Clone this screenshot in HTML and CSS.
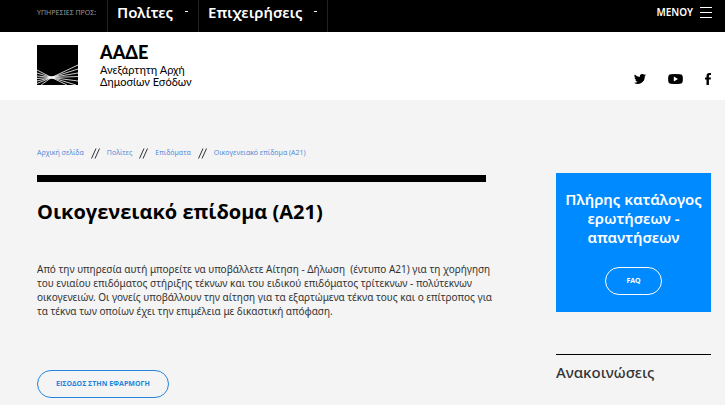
FILE: index.html
```html
<!DOCTYPE html>
<html lang="el">
<head>
<meta charset="utf-8">
<meta name="viewport" content="width=device-width, initial-scale=1">
<title>Οικογενειακό επίδομα (Α21) | ΑΑΔΕ</title>
<link rel="stylesheet" href="styles.css">
</head>
<body>
<nav class="topbar">
  <span class="topbar-label">ΥΠΗΡΕΣΙΕΣ ΠΡΟΣ:</span>
  <a class="topbar-item" href="#">Πολίτες<span class="dash"></span></a>
  <a class="topbar-item" href="#">Επιχειρήσεις<span class="dash"></span></a>
  <button class="menu-button" type="button">ΜΕΝΟΥ
    <svg width="12" height="12" viewBox="0 0 12 12" aria-hidden="true"><path d="M0 1.500h12M0 6.500h12M0 11.500h12" stroke="#fff"/></svg>
  </button>
</nav>
<header class="masthead">
  <a class="brand" href="#">
    <svg class="brand-mark" width="41" height="40" viewBox="0 0 41 40" aria-hidden="true">
      <rect width="41" height="40" fill="#000"/>
      <g stroke="#fff" stroke-width="0.8">
        <path d="M0 25L14.500 32.500L41 20M0 28L14.500 32.500L41 24M0 31L14.500 32.500L41 28M0 33.500L14.500 32.500L41 31.500M0 36L14.500 32.500L41 36M0 38.500L14.500 32.500L39 40M4 40L14.500 32.500L30 40" fill="none"/>
      </g>
      <ellipse cx="14.500" cy="32.500" rx="3" ry="1.200" fill="#fff"/>
    </svg>
    <span class="brand-text">
      <span class="brand-name">ΑΑΔΕ</span>
      <span class="brand-line">Ανεξάρτητη Αρχή</span>
      <span class="brand-line">Δημοσίων Εσόδων</span>
    </span>
  </a>
  <div class="social">
    <a href="#" aria-label="Twitter"><svg width="12" height="10" viewBox="0 0 24 20"><path d="M24 2.400a9.800 9.800 0 0 1-2.800.8A5 5 0 0 0 23.300.5a9.900 9.900 0 0 1-3.100 1.200 4.900 4.900 0 0 0-8.400 4.500A14 14 0 0 1 1.700 1a4.900 4.900 0 0 0 1.500 6.600 4.900 4.900 0 0 1-2.200-.6 4.900 4.900 0 0 0 3.900 4.900 5 5 0 0 1-2.200.1 4.900 4.900 0 0 0 4.600 3.400A9.900 9.900 0 0 1 0 17.500 14 14 0 0 0 21.500 5 10 10 0 0 0 24 2.400z"/></svg></a>
    <a href="#" aria-label="YouTube"><svg width="15" height="10" viewBox="0 0 15 10"><path fill-rule="evenodd" d="M3 .2Q7.500-.2 12 .2Q14.500.3 14.700 2.500Q15 5 14.700 7.500Q14.500 9.700 12 9.800Q7.500 10.200 3 9.800Q.5 9.700.3 7.500Q0 5 .3 2.500Q.5.300 3 .2zM5.800 2.500v5L10 5z"/></svg></a>
    <a href="#" aria-label="Facebook"><svg width="6" height="12" viewBox="0 0 6 12"><path d="M1.500 12V6.600H0V4.500h1.500V3Q1.500.1 4.200.1H6v2H4.900Q3.900 2.100 3.900 3v1.500H6l-.3 2.100H3.900V12z"/></svg></a>
  </div>
</header>
<div class="page">
  <main>
    <nav class="breadcrumb">
      <a href="#">Αρχική σελίδα</a>
      <svg class="slashes" width="9" height="11" viewBox="0 0 9 11" aria-hidden="true"><path d="M.5 10.500L5 .5M4 10.500L8.500.5"/></svg>
      <a href="#">Πολίτες</a>
      <svg class="slashes" width="9" height="11" viewBox="0 0 9 11" aria-hidden="true"><path d="M.5 10.500L5 .5M4 10.500L8.500.5"/></svg>
      <a href="#">Επιδόματα</a>
      <svg class="slashes" width="9" height="11" viewBox="0 0 9 11" aria-hidden="true"><path d="M.5 10.500L5 .5M4 10.500L8.500.5"/></svg>
      <a href="#">Οικογενειακό επίδομα (Α21)</a>
    </nav>
    <h1>Οικογενειακό επίδομα (Α21)</h1>
    <p class="intro">Από την υπηρεσία αυτή μπορείτε να υποβάλλετε Αίτηση - Δήλωση&nbsp; (έντυπο Α21) για τη χορήγηση του ενιαίου επιδόματος στήριξης τέκνων και του ειδικού επιδόματος τρίτεκνων - πολύτεκνων οικογενειών. Οι γονείς υποβάλλουν την αίτηση για τα εξαρτώμενα τέκνα τους και ο επίτροπος για τα τέκνα των οποίων έχει την επιμέλεια με δικαστική απόφαση.</p>
    <a class="pill" href="#">ΕΙΣΟΔΟΣ ΣΤΗΝ ΕΦΑΡΜΟΓΗ</a>
  </main>
  <aside>
    <section class="faq">
      <h2>Πλήρης κατάλογος ερωτήσεων - απαντήσεων</h2>
      <a class="pill pill-light" href="#">FAQ</a>
    </section>
    <section class="news">
      <h2>Ανακοινώσεις</h2>
    </section>
  </aside>
</div>
</body>
</html>
```
FILE: styles.css
```css
* {
  box-sizing: border-box;
}

body {
  margin: 0;
  background: #f4f4f4;
  color: #333;
  font-family: "Open Sans", "Noto Sans", sans-serif;
  font-size: 10px;
}

a {
  color: inherit;
  text-decoration: none;
}

svg {
  display: block;
}

h1,
h2,
p {
  margin: 0;
}

.topbar,
.intro,
.faq h2,
.news h2 {
  font-family: "Noto Sans", "Open Sans", sans-serif;
}

.topbar {
  display: flex;
  height: 32px;
  padding: 0 13px 0 37px;
  background: #000;
  color: #fff;
}

.topbar-label {
  width: 70px;
  color: #999;
  font-size: 7px;
  line-height: 25px;
  white-space: nowrap;
}

.topbar-item {
  display: flex;
  gap: 12px;
  padding: 0 10px 0 9px;
  border-left: 1px solid #222;
  font-size: 15px;
  font-weight: 600;
  line-height: 25px;
}

.topbar-item:nth-of-type(2) {
  border-right: 1px solid #222;
}

.dash {
  width: 3px;
  height: 1px;
  margin-top: 11px;
  background: #fff;
}

.menu-button {
  display: flex;
  align-items: center;
  gap: 7px;
  height: 24px;
  margin-left: auto;
  padding: 0;
  border: 0;
  background: none;
  color: #fff;
  font-family: inherit;
  font-size: 10px;
  font-weight: 600;
}

.masthead {
  display: flex;
  justify-content: space-between;
  height: 68px;
  padding: 13px 14px 0 37px;
  background: #fff;
  color: #000;
}

.brand {
  display: flex;
  gap: 22px;
}

.brand-text {
  display: flex;
  flex-direction: column;
  font-family: Lato, "Open Sans", sans-serif;
}

.brand-name {
  font-size: 18px;
  font-weight: 900;
  line-height: 15px;
  margin-bottom: 4px;
}

.brand-line {
  font-size: 11px;
  line-height: 12px;
}

.social {
  display: flex;
  align-items: center;
  gap: 22px;
  height: 68px;
}

.page {
  display: grid;
  grid-template-columns: minmax(0, 1fr) 155px;
  gap: 70px;
  padding: 0 14px 0 37px;
}

.breadcrumb {
  display: flex;
  align-items: center;
  gap: 7px;
  margin-top: 46px;
  color: #4a86d8;
  font-size: 7px;
  line-height: 14px;
}

.slashes {
  fill: none;
  stroke: #333;
}

h1 {
  margin-top: 15px;
  padding-top: 16px;
  border-top: 7px solid #000;
  color: #000;
  font-size: 20px;
  font-weight: 700;
  line-height: 28px;
}

.intro {
  margin-top: 36px;
  margin-right: -15px;
  line-height: 14px;
}

.pill {
  display: inline-block;
  margin-top: 52px;
  padding: 0 18px;
  border: 1px solid #2585dc;
  border-radius: 14px;
  color: #2585dc;
  font-size: 7px;
  font-weight: 700;
  line-height: 26px;
}

.faq {
  margin-top: 73px;
  padding: 17px 8px;
  background: #008aff;
  color: #fff;
  text-align: center;
}

.faq h2 {
  font-size: 15px;
  font-weight: 600;
  line-height: 19px;
}

.pill-light {
  margin-top: 20px;
  padding: 0 20px;
  border-color: #fff;
  color: #fff;
}

.news {
  margin-top: 42px;
  border-top: 1px solid #000;
}

.news h2 {
  margin-top: 7px;
  font-size: 15px;
  font-weight: 500;
  line-height: 20px;
}
```
